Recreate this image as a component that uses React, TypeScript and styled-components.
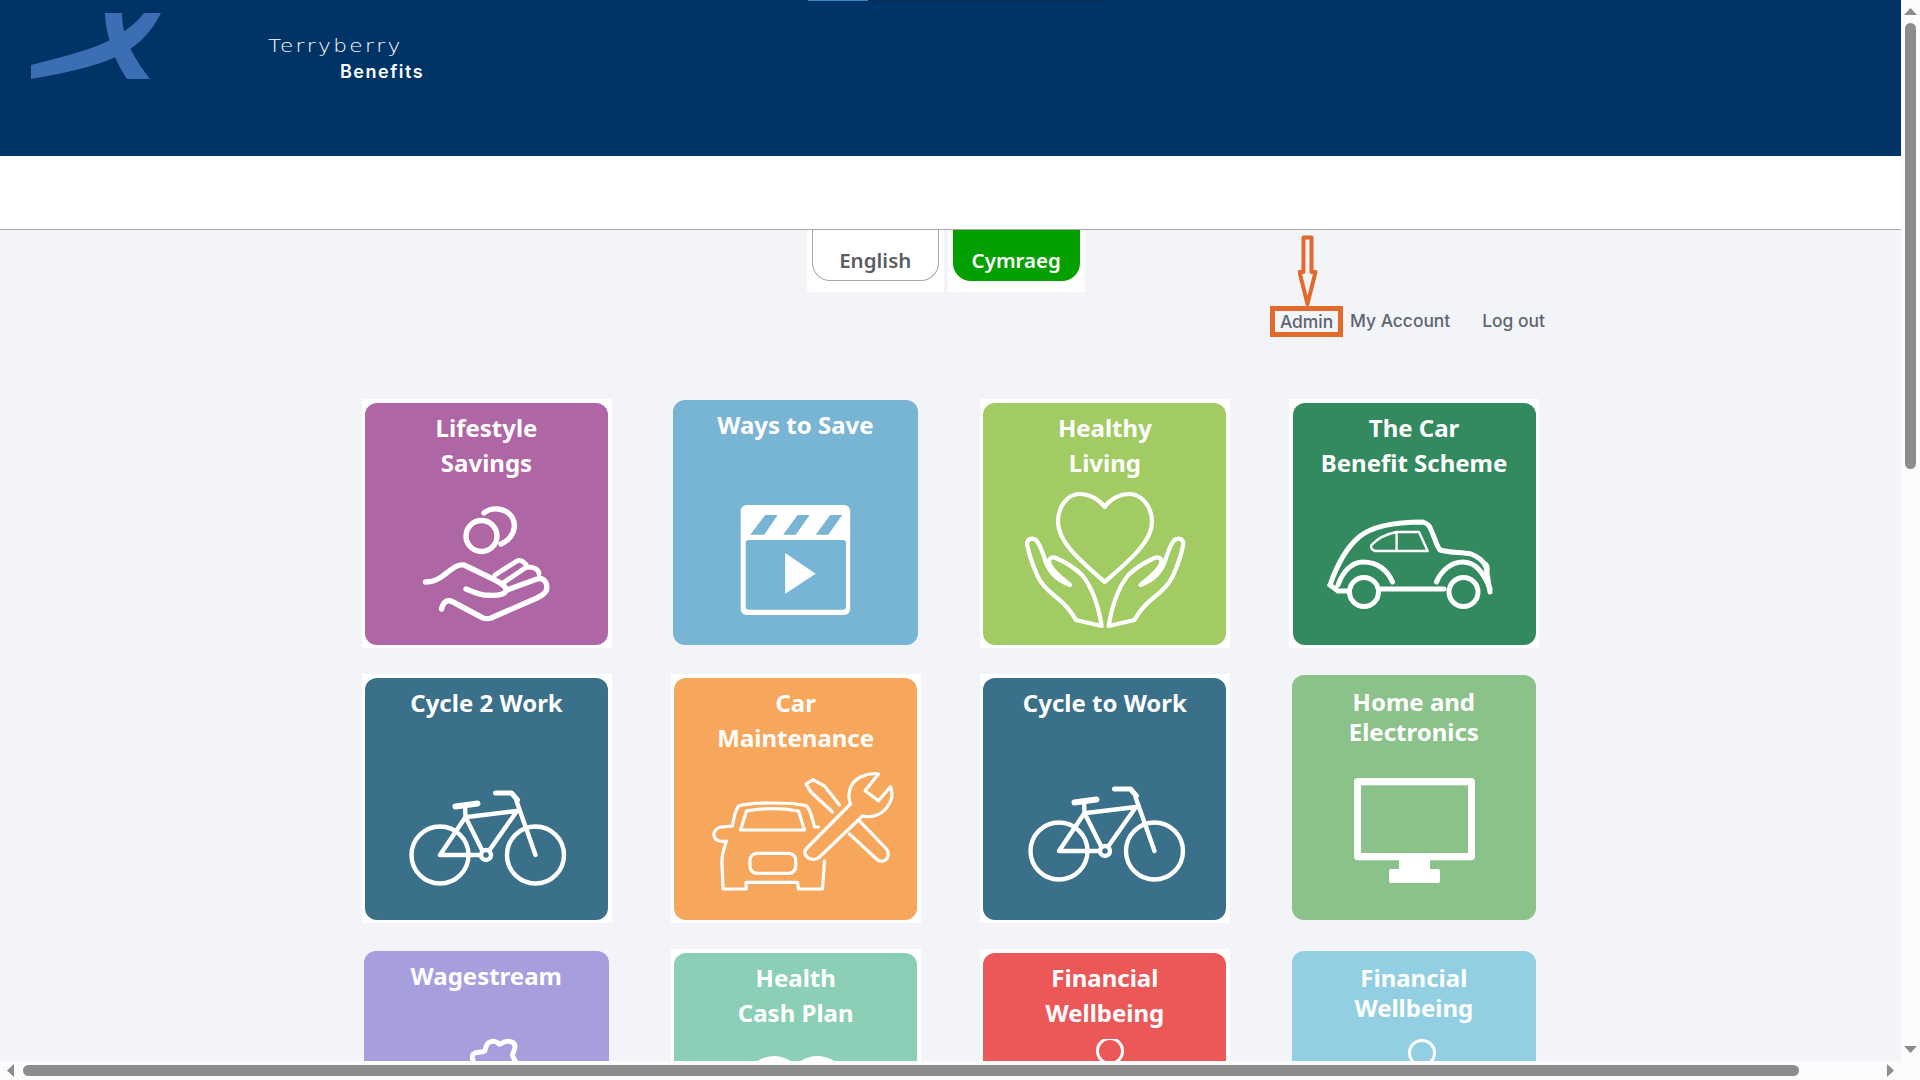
import React from "react";
import styled, { createGlobalStyle } from "styled-components";

const GlobalStyle = createGlobalStyle`
  html, body {
    margin: 0;
    padding: 0;
    height: 100%;
    overflow: hidden;
    background: #fcfcfc;
    font-family: "Noto Sans", "Open Sans", sans-serif;
  }
`;

const Shell = styled.div`
  display: grid;
  grid-template-columns: 1901px 19px;
  grid-template-rows: 1061px 19px;
  width: 1920px;
  height: 1080px;
  overflow: hidden;
  background: #fcfcfc;
`;

const Page = styled.div`
  overflow: hidden;
  background: #f2f4f8;
`;

const Header = styled.header`
  height: 156px;
  background: #003466;
  display: flex;
  flex-direction: column;
`;

const ProgressStrip = styled.div`
  width: 302px;
  height: 1px;
  margin-left: 808px;
  background: #0d2a4d;
  flex-shrink: 0;
`;

const ProgressFill = styled.div`
  width: 60px;
  height: 100%;
  background: #3f86c4;
`;

const Brand = styled.div`
  display: flex;
  padding: 12px 0 0 31px;
`;

const BrandText = styled.div`
  display: flex;
  flex-direction: column;
  margin-left: 106px;
  padding-top: 21px;
  color: #fff;
`;

const BrandName = styled.span`
  font-family: "DejaVu Sans", sans-serif;
  font-weight: 200;
  font-size: 18.5px;
  line-height: 24px;
  letter-spacing: 2px;
  transform: scaleX(1.17);
  transform-origin: left center;
`;

const BrandProduct = styled.span`
  font-family: "Inter", sans-serif;
  font-weight: 600;
  font-size: 18px;
  line-height: 27px;
  letter-spacing: 1.5px;
  margin-left: 72px;
`;

const Band = styled.div`
  height: 73px;
  background: #fff;
  border-bottom: 1px solid #a6a6a8;
`;

const LangRow = styled.div`
  display: flex;
  gap: 4px;
  padding-left: 807px;
`;

const LangCell = styled.div`
  width: 137px;
  height: 62px;
  padding: 0 5px 11px 4.5px;
  box-sizing: border-box;
  background: #fff;
`;

const LangButton = styled.div<{ $active?: boolean }>`
  height: 100%;
  box-sizing: border-box;
  display: flex;
  align-items: flex-end;
  justify-content: center;
  padding-bottom: ${(p) => (p.$active ? 6 : 5)}px;
  border-radius: 0 0 18px 18px;
  border: ${(p) => (p.$active ? "none" : "1px solid #a9a9a9")};
  border-top: none;
  background: ${(p) => (p.$active ? "#04a000" : "#fff")};
  color: ${(p) => (p.$active ? "#fff" : "#5a5d62")};
  font-size: 20.5px;
  font-weight: 600;
  line-height: 30px;
`;

const NavRow = styled.nav`
  display: flex;
  align-items: center;
  padding: 14px 0 0 1270px;
  color: #5d6470;
  font-family: "Inter", sans-serif;
  font-size: 17.4px;
  font-weight: 500;
  line-height: 29px;
`;

const AdminBox = styled.div`
  position: relative;
  width: 73px;
  height: 31px;
  box-sizing: border-box;
  border: 5px solid #e26a2c;
  display: flex;
  align-items: center;
  justify-content: center;
`;

const Arrow = styled.svg`
  position: absolute;
  left: 23px;
  bottom: 26px;
`;

const NavLink = styled.a<{ $gap: number }>`
  margin-left: ${(p) => p.$gap}px;
  margin-top: -2px;
`;

const TileGrid = styled.main`
  display: grid;
  grid-template-columns: repeat(4, 250px);
  grid-auto-rows: 249px;
  column-gap: 59.2px;
  row-gap: 26px;
  margin-top: 62px;
  padding-left: 361.5px;
`;

const TileCell = styled.div<{ $framed?: boolean; $nudge: number }>`
  box-sizing: border-box;
  padding: ${(p) => (p.$framed ? "4px 3.5px 3px" : `${p.$nudge}px 3px 3px 2.5px`)};
  background: ${(p) => (p.$framed ? "#fff" : "transparent")};
  display: flex;
`;

const Tile = styled.div<{ $color: string }>`
  flex: 1;
  display: flex;
  flex-direction: column;
  border-radius: 12px;
  overflow: hidden;
  background: ${(p) => p.$color};
  color: #fff;
`;

const Title = styled.h3<{ $tight?: boolean }>`
  margin: 0;
  height: 86px;
  flex-shrink: 0;
  box-sizing: border-box;
  padding-top: ${(p) => (p.$tight ? 11.5 : 8)}px;
  text-align: center;
  font-size: 24px;
  font-weight: 700;
  line-height: ${(p) => (p.$tight ? 30 : 34.5)}px;
  white-space: pre-line;
`;

const IconCanvas = styled.svg`
  display: block;
  width: 243px;
  height: 157px;
  flex-shrink: 0;
  fill: none;
  stroke: #fff;
  stroke-linecap: round;
  stroke-linejoin: round;
`;

const LogoMark = () => (
  <svg width="131" height="67" viewBox="31 13 131 67">
    <path fill="#3c6eb4" d="M31 65C60 58 88 50 104 43C120 35 135 25 144 13H161C150 35 135 48 116 57C90 68 60 74 31 79Z" />
    <path fill="#3c6eb4" d="M105 13H122C122 28 126 40 131 50C136 60 143 70 150 79H127C120 68 113 55 110 42C107 32 105 22 105 13Z" />
  </svg>
);

const CoinsIcon = () => (
  <g strokeWidth="5.4">
    <circle cx="116.5" cy="133" r="15.5" />
    <path d="M119 110C126 104 140 104 147 114C152 123 149 135 136 141" />
    <path d="M60.5 179C68 179 73 177 79 172C87 166 92 161 99 162L130 177C138 181 142 185 141 188C139 192 130 193 119 192C112 191 106 188 101 186" />
    <path d="M130 172L152 158C156 156 161 160 162 164" strokeWidth="4.8" />
    <path d="M138 180L160 165C168 162 174 167 174 171" strokeWidth="4.8" />
    <path d="M142 187L172 176C179 174 183 180 181.5 187C180 191 176 193 172 195L126 215C123 216 121 216 118 215L88 199C82 196 78 199 76.5 206" />
  </g>
);

const ClapperIcon = ({ color }: { color: string }) => (
  <g stroke="none" transform="translate(0.7 0)">
    <rect x="67" y="105" width="109.5" height="110" rx="6" fill="#fff" />
    <rect x="72" y="140" width="100.3" height="69.7" rx="3" fill={color} />
    <path fill={color} d="M91.5 115H104L90.5 134.7H76.5ZM124 115H136L122 134.7H109.5ZM156.5 115H168.5L154.5 134.7H142Z" />
    <path fill="#fff" d="M111.5 153L142 173.7L111.5 193.7Z" />
  </g>
);

const HeartHandsIcon = () => {
  const hand = "M93 217C88 208 82 201 73 194C64 187 58 180 55 174C50 163 46 152 44 141C44 136 49 134 53 137C57 141 60 150 63 160C67 170 76 178 87 182C80 176 71 170 67 162C64 156 68 153 73 155C84 160 94 167 99 172C108 183 115 200 118.7 223Z";
  return (
    <g strokeWidth="4.2">
      <path d="M121.7 104C115 95 105 91 97 91C83 91 75 105 75 119C75 140 100 160 121.7 179C143 160 169 140 169 119C169 105 160 91 146 91C138 91 128 95 121.7 104Z" />
      <path d={hand} />
      <path d={hand} transform="translate(244.4 0) scale(-1 1)" />
    </g>
  );
};

const BeetleIcon = () => (
  <g>
    <g strokeWidth="5">
      <path d="M37 182C44 162 53 145 66 134C78 124 97 119 130 119C136 121 137 124 138 127C142 135 143 142 147 147C158 150 168 149 178 151C186 154 191 159 193 164L197 189" />
      <path d="M37 182L45 188H54M88 186H151M45 182C50 168 59 159 70 159C85 159 95 168 99.5 179M143.5 179C148 168 158 159 170 159C183 159 191 170 197 186" />
      <circle cx="71" cy="189" r="14.5" />
      <circle cx="170.5" cy="189" r="14.5" />
    </g>
    <g strokeWidth="2.4">
      <path d="M78.5 142C84 136 93 131 103.6 129H126L134.7 148H82.3C79 147 77 145 78.5 142ZM103.6 129V148" />
      <path d="M189.4 159C195 159 198 166 193 172" />
    </g>
  </g>
);

const BikeIcon = ({ dx = 0, dy = 0 }: { dx?: number; dy?: number }) => (
  <g transform={`translate(${dx} ${dy})`}>
    <g strokeWidth="4.4">
      <circle cx="75" cy="177" r="28.5" />
      <circle cx="170.5" cy="177" r="28.5" />
      <path d="M100 127L100.5 139L75 177H115M100.5 139L117 172M102 139L152 133L124.5 172M151.5 123L170.5 177" />
      <circle cx="121" cy="177" r="5" />
    </g>
    <path strokeWidth="6" d="M90.5 128.5L112.5 125.5" />
    <path strokeWidth="5" d="M130.5 115H146.5L152.5 122" />
  </g>
);

const RepairIcon = () => (
  <g strokeWidth="3.2" transform="translate(0.5 0)">
    <path d="M144 149H140C138 140 136 132 132 128C120 124 76 124 64 128C60 134 59 141 58 148L47 149C41 150 38 155 40 159C41 162 45 164 52 163C49 171 47 178 47.5 186L48.6 211H71.6V204.3H123L124 211H148L150 183" />
    <path d="M72 133C88 130 108 130 124 133L130 152H66Z" />
    <rect x="75.4" y="175.3" width="45.9" height="20" rx="7" />
    <path d="M131.5 171L176 126C172 115 176 104 186 99C192 96 198 95 204 96L190.6 112.7L204 122.7L216 108.7C219 116 217 124 212 130C206 137 197 140 188 138L145 179C141 183 134 182 131 177C130 175 130 173 131.5 171Z" />
    <path d="M165 127L150 108L138.5 101.7L131.6 106L136.6 114.3L158 134" />
    <path d="M184.6 142.7L212 171C215 175 214 180 211 182C208 184 205 184 202 181L175 156" />
  </g>
);

const MonitorIcon = ({ color }: { color: string }) => (
  <g stroke="none">
    <rect x="62" y="103" width="121" height="82.3" rx="4" fill="#fff" />
    <rect x="69" y="110.3" width="107" height="67.7" fill={color} />
    <rect x="107" y="185" width="31" height="10" fill="#fff" />
    <rect x="97" y="194" width="51" height="14" rx="2" fill="#fff" />
  </g>
);

const BudIcon = () => (
  <path strokeWidth="5" d="M109 110C108 105 108 103 111 102C114 100.5 118 102 120.7 100C122 97 122 93 125 91.5C129 89 133 91 135.7 93.3C138 92 141 90 144 90.3C148 90.5 151 92 151 96C151 99 149 101 148.4 104.3C149 107 151 109 152.4 112" />
);

const GlassesIcon = () => (
  <path fill="#fff" stroke="none" d="M82 109Q100 97 118 109ZM125 109Q143 97 162 109Z" />
);

const RingIcon = ({ cx, cy }: { cx: number; cy: number }) => (
  <circle cx={cx} cy={cy} r="12.5" strokeWidth="3" />
);

const tileData = [
  { title: "Lifestyle\nSavings", color: "#ae66a5", framed: true, icon: <CoinsIcon /> },
  { title: "Ways to Save", color: "#78b4d3", nudge: 1, icon: <ClapperIcon color="#78b4d3" /> },
  { title: "Healthy\nLiving", color: "#a2cb64", framed: true, icon: <HeartHandsIcon /> },
  { title: "The Car\nBenefit Scheme", color: "#338a5f", framed: true, icon: <BeetleIcon /> },
  { title: "Cycle 2 Work", color: "#3a7089", framed: true, icon: <BikeIcon /> },
  { title: "Car\nMaintenance", color: "#f6a75b", framed: true, icon: <RepairIcon /> },
  { title: "Cycle to Work", color: "#3a7089", framed: true, icon: <BikeIcon dx={1} dy={-4} /> },
  { title: "Home and\nElectronics", color: "#8ac289", nudge: 1, tight: true, icon: <MonitorIcon color="#8ac289" /> },
  { title: "Wagestream", color: "#a69edd", nudge: 2, icon: <BudIcon /> },
  { title: "Health\nCash Plan", color: "#8bcfb6", framed: true, icon: <GlassesIcon /> },
  { title: "Financial\nWellbeing", color: "#ec5757", framed: true, icon: <RingIcon cx={127} cy={98} /> },
  { title: "Financial\nWellbeing", color: "#92cfe3", nudge: 2, tight: true, icon: <RingIcon cx={130} cy={102} /> },
];

const ScrollGutter = styled.div`
  display: flex;
  flex-direction: column;
  align-items: center;
  padding: 8px 0;
  background: #fcfcfc;
`;

const VerticalThumb = styled.div`
  width: 11px;
  height: 446px;
  margin-top: 8px;
  border-radius: 6px;
  background: #8c8c8c;
`;

const GutterSpacer = styled.div`
  flex: 1;
`;

const BottomBar = styled.div`
  grid-column: 1 / span 2;
  display: flex;
  align-items: center;
  padding: 0 26px 0 7px;
  background: #fcfcfc;
`;

const HorizontalThumb = styled.div`
  width: 1776px;
  height: 11px;
  margin-left: 8.5px;
  border-radius: 6px;
  background: #8c8c8c;
`;

const Triangle = styled.svg`
  display: block;
  flex-shrink: 0;
  fill: #8c8c8c;
`;

export default function App() {
  return (
    <Shell>
      <GlobalStyle />
      <Page>
        <Header>
          <ProgressStrip>
            <ProgressFill />
          </ProgressStrip>
          <Brand>
            <LogoMark />
            <BrandText>
              <BrandName>Terryberry</BrandName>
              <BrandProduct>Benefits</BrandProduct>
            </BrandText>
          </Brand>
        </Header>
        <Band />
        <LangRow>
          <LangCell>
            <LangButton>English</LangButton>
          </LangCell>
          <LangCell>
            <LangButton $active>Cymraeg</LangButton>
          </LangCell>
        </LangRow>
        <NavRow>
          <AdminBox>
            Admin
            <Arrow width="20" height="71" viewBox="0 0 20 71">
              <path d="M5.5 2.5H13.5V37H17.5L9.5 69L1.5 37H5.5Z" fill="none" stroke="#e26a2c" strokeWidth="4" strokeLinejoin="round" />
            </Arrow>
          </AdminBox>
          <NavLink $gap={7}>My Account</NavLink>
          <NavLink $gap={32}>Log out</NavLink>
        </NavRow>
        <TileGrid>
          {tileData.map((tile, i) => (
            <TileCell key={i} $framed={tile.framed} $nudge={tile.nudge ?? 0}>
              <Tile $color={tile.color}>
                <Title $tight={tile.tight}>{tile.title}</Title>
                <IconCanvas viewBox="0 86 243 157">{tile.icon}</IconCanvas>
              </Tile>
            </TileCell>
          ))}
        </TileGrid>
      </Page>
      <ScrollGutter>
        <Triangle width="13" height="7" viewBox="0 0 13 7">
          <path d="M6.5 0L13 7H0Z" />
        </Triangle>
        <VerticalThumb />
        <GutterSpacer />
        <Triangle width="13" height="7" viewBox="0 0 13 7">
          <path d="M0 0H13L6.5 7Z" />
        </Triangle>
      </ScrollGutter>
      <BottomBar>
        <Triangle width="7" height="13" viewBox="0 0 7 13">
          <path d="M7 0V13L0 6.5Z" />
        </Triangle>
        <HorizontalThumb />
        <GutterSpacer />
        <Triangle width="7" height="13" viewBox="0 0 7 13">
          <path d="M0 0L7 6.5L0 13Z" />
        </Triangle>
      </BottomBar>
    </Shell>
  );
}
